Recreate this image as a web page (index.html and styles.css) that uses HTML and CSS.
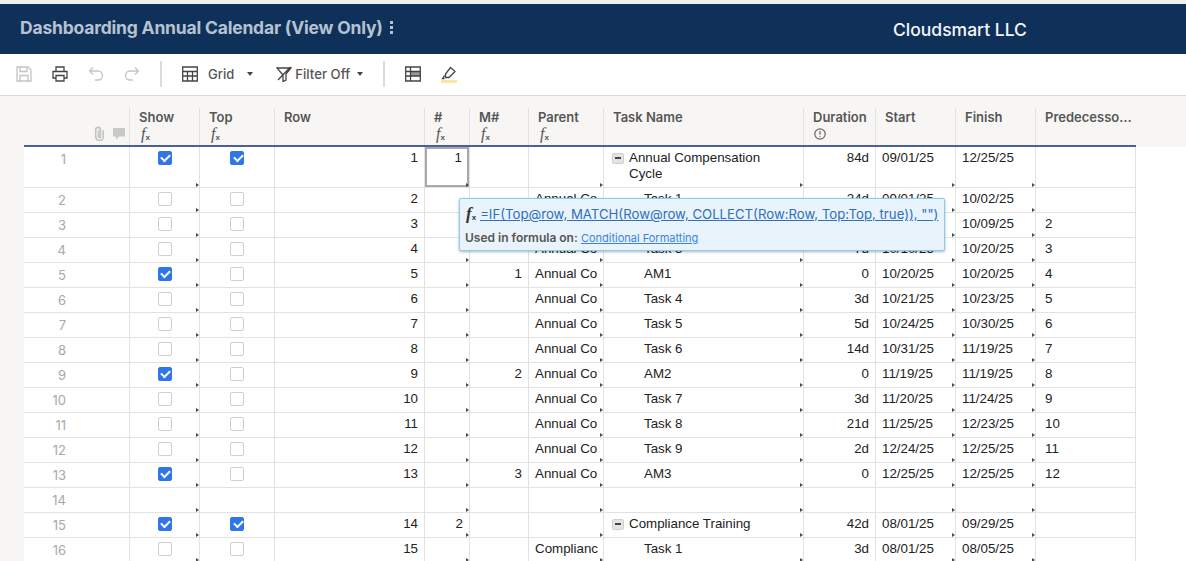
FILE: index.html
```html
<!DOCTYPE html>
<html lang="en">
<head>
<meta charset="utf-8">
<title>Dashboarding Annual Calendar</title>
<link rel="stylesheet" href="styles.css">
</head>
<body>
<div class="strip"></div>
<header class="banner">
  <div class="title">Dashboarding Annual Calendar (View Only)<span class="kebab"><i></i><i></i><i></i></span></div>
  <div class="brand">Cloudsmart LLC</div>
</header>
<nav class="toolbar">
  <svg class="ic off" viewBox="0 0 16 16"><path d="M1 1h11l3 3v11H1zM4 1v4.500h7V1M4 15V9.500h8V15"/></svg>
  <svg class="ic gap20" viewBox="0 0 16 16"><path d="M4 5V1h8v4M4 12H1V5.500h14V12h-3M4 9.500h8V15H4z"/></svg>
  <svg class="ic off gap20" viewBox="0 0 16 16"><path d="M5 1.500 1.500 5 5 8.500M1.500 5H10a4.500 4.500 0 0 1 0 9H7"/></svg>
  <svg class="ic off gap20" viewBox="0 0 16 16"><path d="M11 1.500 14.500 5 11 8.500M14.500 5H6a4.500 4.500 0 0 0 0 9h3"/></svg>
  <span class="sep first"></span>
  <svg class="ic gap20" viewBox="0 0 16 16"><path d="M.700 1h14.600v14H.700zM.700 5.500h14.600M.700 10h14.600M5.500 5.500V15M10.500 5.500V15"/></svg>
  <span class="tlabel grid-label">Grid</span><span class="caret grid-caret"></span>
  <svg class="ic filter" viewBox="0 0 16 16"><path d="M1 2h14l-5 6v6l-3 1.500V9zM2 14 14.500 1"/></svg>
  <span class="tlabel filter-label">Filter Off</span><span class="caret filter-caret"></span>
  <span class="sep second"></span>
  <svg class="ic table" viewBox="0 0 16 16"><path class="shade" d="M5.500 5.500h10V10h-10z"/><path d="M.700 1h14.600v14H.700zM.700 5.500h14.600M.700 10h14.600M5.500 1v14"/></svg>
  <span class="marker"><svg class="ic" viewBox="0 0 16 14"><path d="M9.500 1.500 14 5.500l-6 6H4.500v-3.500zM3.500 12.500h-2l2-3"/></svg></span>
</nav>

<section class="sheet">
  <div class="head">
    <div class="hc rownum"><svg class="clip" viewBox="0 0 12 14"><path d="M9.500 4v6a3.500 3.500 0 0 1-7 0V3.500a2.200 2.200 0 0 1 4.400 0V10a.9.9 0 0 1-1.800 0V4"/></svg><svg class="bubble" viewBox="0 0 12 12"><path d="M0 0h12v8.500H6L3 12V8.500H0z"/></svg></div>
    <div class="hc">Show<span class="fx">f<sub>x</sub></span></div>
    <div class="hc">Top<span class="fx">f<sub>x</sub></span></div>
    <div class="hc">Row</div>
    <div class="hc">#<span class="fx">f<sub>x</sub></span></div>
    <div class="hc">M#<span class="fx">f<sub>x</sub></span></div>
    <div class="hc">Parent<span class="fx">f<sub>x</sub></span></div>
    <div class="hc">Task Name</div>
    <div class="hc">Duration<svg class="info" viewBox="0 0 12 12"><circle cx="6" cy="6" r="5.200"/><path d="M6 3v3.800M6 8.200v1"/></svg></div>
    <div class="hc">Start</div>
    <div class="hc">Finish</div>
    <div class="hc">Predecesso…</div>
  </div>

  <div class="body">
    <div class="gutter"></div>
    <div class="rows">
      <div class="row tall"><div class="c n">1</div><div class="c b t"><span class="cb on"></span></div><div class="c b"><span class="cb on"></span></div><div class="c r">1</div><div class="c r t sel">1</div><div class="c r"></div><div class="c p t"></div><div class="c task t"><span class="exp"></span><span class="wrap">Annual Compensation Cycle</span></div><div class="c r">84d</div><div class="c t">09/01/25</div><div class="c t">12/25/25</div><div class="c"></div></div>
      <div class="row"><div class="c n">2</div><div class="c b t"><span class="cb"></span></div><div class="c b"><span class="cb"></span></div><div class="c r">2</div><div class="c r t"></div><div class="c r"></div><div class="c p t">Annual Co</div><div class="c sub t">Task 1</div><div class="c r">24d</div><div class="c t">09/01/25</div><div class="c t">10/02/25</div><div class="c"></div></div>
      <div class="row"><div class="c n">3</div><div class="c b t"><span class="cb"></span></div><div class="c b"><span class="cb"></span></div><div class="c r">3</div><div class="c r t"></div><div class="c r"></div><div class="c p t">Annual Co</div><div class="c sub t">Task 2</div><div class="c r">5d</div><div class="c t">10/03/25</div><div class="c t">10/09/25</div><div class="c">2</div></div>
      <div class="row"><div class="c n">4</div><div class="c b t"><span class="cb"></span></div><div class="c b"><span class="cb"></span></div><div class="c r">4</div><div class="c r t"></div><div class="c r"></div><div class="c p t">Annual Co</div><div class="c sub t">Task 3</div><div class="c r">7d</div><div class="c t">10/10/25</div><div class="c t">10/20/25</div><div class="c">3</div></div>
      <div class="row"><div class="c n">5</div><div class="c b t"><span class="cb on"></span></div><div class="c b"><span class="cb"></span></div><div class="c r">5</div><div class="c r t"></div><div class="c r">1</div><div class="c p t">Annual Co</div><div class="c sub t">AM1</div><div class="c r">0</div><div class="c t">10/20/25</div><div class="c t">10/20/25</div><div class="c">4</div></div>
      <div class="row"><div class="c n">6</div><div class="c b t"><span class="cb"></span></div><div class="c b"><span class="cb"></span></div><div class="c r">6</div><div class="c r t"></div><div class="c r"></div><div class="c p t">Annual Co</div><div class="c sub t">Task 4</div><div class="c r">3d</div><div class="c t">10/21/25</div><div class="c t">10/23/25</div><div class="c">5</div></div>
      <div class="row"><div class="c n">7</div><div class="c b t"><span class="cb"></span></div><div class="c b"><span class="cb"></span></div><div class="c r">7</div><div class="c r t"></div><div class="c r"></div><div class="c p t">Annual Co</div><div class="c sub t">Task 5</div><div class="c r">5d</div><div class="c t">10/24/25</div><div class="c t">10/30/25</div><div class="c">6</div></div>
      <div class="row"><div class="c n">8</div><div class="c b t"><span class="cb"></span></div><div class="c b"><span class="cb"></span></div><div class="c r">8</div><div class="c r t"></div><div class="c r"></div><div class="c p t">Annual Co</div><div class="c sub t">Task 6</div><div class="c r">14d</div><div class="c t">10/31/25</div><div class="c t">11/19/25</div><div class="c">7</div></div>
      <div class="row"><div class="c n">9</div><div class="c b t"><span class="cb on"></span></div><div class="c b"><span class="cb"></span></div><div class="c r">9</div><div class="c r t"></div><div class="c r">2</div><div class="c p t">Annual Co</div><div class="c sub t">AM2</div><div class="c r">0</div><div class="c t">11/19/25</div><div class="c t">11/19/25</div><div class="c">8</div></div>
      <div class="row"><div class="c n">10</div><div class="c b t"><span class="cb"></span></div><div class="c b"><span class="cb"></span></div><div class="c r">10</div><div class="c r t"></div><div class="c r"></div><div class="c p t">Annual Co</div><div class="c sub t">Task 7</div><div class="c r">3d</div><div class="c t">11/20/25</div><div class="c t">11/24/25</div><div class="c">9</div></div>
      <div class="row"><div class="c n">11</div><div class="c b t"><span class="cb"></span></div><div class="c b"><span class="cb"></span></div><div class="c r">11</div><div class="c r t"></div><div class="c r"></div><div class="c p t">Annual Co</div><div class="c sub t">Task 8</div><div class="c r">21d</div><div class="c t">11/25/25</div><div class="c t">12/23/25</div><div class="c">10</div></div>
      <div class="row"><div class="c n">12</div><div class="c b t"><span class="cb"></span></div><div class="c b"><span class="cb"></span></div><div class="c r">12</div><div class="c r t"></div><div class="c r"></div><div class="c p t">Annual Co</div><div class="c sub t">Task 9</div><div class="c r">2d</div><div class="c t">12/24/25</div><div class="c t">12/25/25</div><div class="c">11</div></div>
      <div class="row"><div class="c n">13</div><div class="c b t"><span class="cb on"></span></div><div class="c b"><span class="cb"></span></div><div class="c r">13</div><div class="c r t"></div><div class="c r">3</div><div class="c p t">Annual Co</div><div class="c sub t">AM3</div><div class="c r">0</div><div class="c t">12/25/25</div><div class="c t">12/25/25</div><div class="c">12</div></div>
      <div class="row"><div class="c n">14</div><div class="c b t"></div><div class="c b"></div><div class="c r"></div><div class="c r t"></div><div class="c r"></div><div class="c p t"></div><div class="c sub t"></div><div class="c r"></div><div class="c t"></div><div class="c t"></div><div class="c"></div></div>
      <div class="row"><div class="c n">15</div><div class="c b t"><span class="cb on"></span></div><div class="c b"><span class="cb on"></span></div><div class="c r">14</div><div class="c r t">2</div><div class="c r"></div><div class="c p t"></div><div class="c task t"><span class="exp"></span><span class="wrap">Compliance Training</span></div><div class="c r">42d</div><div class="c t">08/01/25</div><div class="c t">09/29/25</div><div class="c"></div></div>
      <div class="row"><div class="c n">16</div><div class="c b t"><span class="cb"></span></div><div class="c b"><span class="cb"></span></div><div class="c r">15</div><div class="c r t"></div><div class="c r"></div><div class="c p t">Complianc</div><div class="c sub t">Task 1</div><div class="c r">3d</div><div class="c t">08/01/25</div><div class="c t">08/05/25</div><div class="c"></div></div>
    </div>
  </div>
</section>

<aside class="tip">
  <div class="tip-formula"><span class="fx-bold">f<sub>x</sub></span><a>=IF(Top@row, MATCH(Row@row, COLLECT(Row:Row, Top:Top, true)), "")</a></div>
  <div class="tip-used"><b>Used in formula on:</b> <a>Conditional Formatting</a></div>
</aside>
</body>
</html>
```
FILE: styles.css
```css
* { box-sizing: border-box; }
html, body { margin: 0; height: 100%; overflow: hidden; background: #fff; }
body { width: 1186px; height: 561px; font-family: "Liberation Sans", Arial, sans-serif; position: relative; }

.strip { height: 4px; background: #f0f0f0; }
.banner { height: 50px; background: #0f3159; display: flex; align-items: center; font-family: Inter, sans-serif; padding-left: 20px; }
.title { width: 873px; margin-bottom: 3px; font-size: 17.5px; font-weight: 700; color: #b6c2d1; letter-spacing: -.2px; display: flex; align-items: center; }
.kebab { display: inline-flex; flex-direction: column; gap: 2px; margin-left: 7px; }
.kebab i { width: 3px; height: 3px; background: #b6c2d1; }
.brand { font-size: 17.5px; font-weight: 500; color: #f4f6f9; }

.toolbar { height: 42px; border-bottom: 1px solid #d9d9d9; display: flex; align-items: center; padding: 0 0 1px 16px; }
.ic { width: 16px; height: 16px; flex: none; fill: none; stroke: #444; stroke-width: 1.3; }
.ic.off { stroke: #c4c4c4; }
.gap20 { margin-left: 20px; }
.sep { width: 2px; height: 26px; background: #dcdcdc; flex: none; }
.sep.first { margin-left: 20px; }
.sep.first + .ic { margin-left: 20px; }
.sep.second { margin-left: 20px; }
.tlabel { font-family: Inter, sans-serif; font-size: 13px; font-weight: 500; color: #555; }
.grid-label { margin-left: 10px; }
.caret { width: 0; height: 0; border: 3px solid transparent; border-top: 4px solid #444; border-bottom: 0; flex: none; }
.grid-caret { margin-left: 13px; }
.filter { margin-left: 23px; }
.filter-label { margin-left: 3px; font-size: 13.2px; }
.filter-caret { margin-left: 7px; }
.table { margin-left: 20px; }
.shade { fill: #999; stroke: none; }
.marker { margin-left: 20px; width: 16px; height: 17px; border-bottom: 3px solid #f7e9a0; display: block; }
.marker .ic { display: block; height: 14px; }

.sheet { background: #f7f6f4; }
.head { margin-left: 24px; width: 1112px; height: 51px; border-bottom: 2px solid #4b5f9e; display: grid; grid-template-columns: 106px 70px 75px 150px 45px 59px 75px 200px 72px 80px 80px 100px; }
.hc { margin-top: 12px; border-right: 1px solid #e3e2df; padding-left: 9px; font-family: Inter, sans-serif; font-size: 13px; font-weight: 600; line-height: 18px; color: #565656; white-space: nowrap; overflow: hidden; }
.hc:last-child { border-right: 0; }
.rownum { display: flex; align-items: flex-end; justify-content: flex-end; gap: 7px; padding: 0 4px 4px 0; }
.clip { width: 13px; height: 15px; fill: none; stroke: #c2c2c0; stroke-width: 1.5; }
.bubble { width: 12px; height: 12px; fill: #c9c9c7; margin-bottom: 1px; }
.fx { display: block; font-family: "Liberation Serif", serif; font-style: italic; font-weight: 400; font-size: 16px; line-height: 15px; color: #555; padding-left: 2px; }
.fx sub, .fx-bold sub { font-size: 8px; font-weight: 700; vertical-align: -1px; line-height: 0; font-family: "Liberation Sans", sans-serif; font-style: normal; }
.info { display: block; width: 12px; height: 12px; margin: 2px 0 0 1px; fill: none; stroke: #666; stroke-width: 1.2; }

.body { display: flex; background: #fff; }
.gutter { width: 24px; background: #f7f6f4; flex: none; }
.rows { width: 1112px; flex: none; background: #fff; }
.row { height: 25px; display: grid; grid-template-columns: 106px 70px 75px 150px 45px 59px 75px 200px 72px 80px 80px 100px; }
.row.tall { height: 41px; }
.c { position: relative; border-right: 1px solid #e2e2e2; border-bottom: 1px solid #e2e2e2; padding: 3px 6px 0; font-size: 13.33px; line-height: 16px; color: #222; white-space: nowrap; }
.row .c:last-child { padding-left: 9px; }
.c.r { text-align: right; }
.c.n { padding: 4px 63px 0 0; text-align: right; font-family: Inter, sans-serif; font-size: 13px; color: #a8a8a8; }
.c.b { display: flex; justify-content: center; padding: 4px 0 0; }
.c.p { overflow: hidden; padding-right: 5px; }
.c.sub { padding-left: 40px; }
.c.task { display: flex; gap: 5px; padding-left: 8px; white-space: normal; }
.wrap { display: block; width: 160px; }
.exp { flex: none; width: 12px; height: 11px; margin-top: 3px; background: #e4e4e4; border: 1px solid #d0d0d0; border-radius: 2px; position: relative; }
.exp::after { content: ""; position: absolute; left: 2px; top: 3px; width: 6px; height: 2px; background: #444; }
.t::after { content: ""; position: absolute; right: 0; bottom: 0; border-left: 3px solid #4a4a4a; border-top: 2.5px solid transparent; border-bottom: 2.5px solid transparent; }
.c.sel { box-shadow: inset 0 0 0 2px #a9a9a9; padding: 3px 7px 0 6px; }

.cb { width: 14px; height: 14px; border: 1px solid #cfcfcf; border-radius: 2px; background: #fff; display: block; position: relative; }
.cb.on { background: #2f77e8; border-color: #2f77e8; }
.cb.on::after { content: ""; position: absolute; left: 2.500px; top: 1.500px; width: 7px; height: 4px; border-left: 2px solid #fff; border-bottom: 2px solid #fff; transform: rotate(-45deg); }

.tip { position: absolute; left: 459px; top: 198px; width: 486px; height: 53px; background: #e8f3fb; border: 1px solid #8ccbf0; border-radius: 2px; box-shadow: 0 1px 3px rgba(0,0,0,.3); padding: 6px 0 0 6px; font-family: Inter, sans-serif; }
.tip-formula { display: flex; align-items: center; gap: 4px; height: 18px; white-space: nowrap; }
.tip-formula a { font-size: 13.2px; color: #2e6fc0; text-decoration: underline; }
.fx-bold { font-family: "Liberation Serif", serif; font-style: italic; font-weight: 700; font-size: 17px; line-height: 14px; color: #333; }
.tip-used { margin-top: 8px; margin-left: -1px; font-size: 11px; line-height: 14px; color: #555; white-space: nowrap; }
.tip-used b { font-weight: 600; font-size: 12px; }
.tip-used a { color: #3b83e0; text-decoration: underline; }
```
